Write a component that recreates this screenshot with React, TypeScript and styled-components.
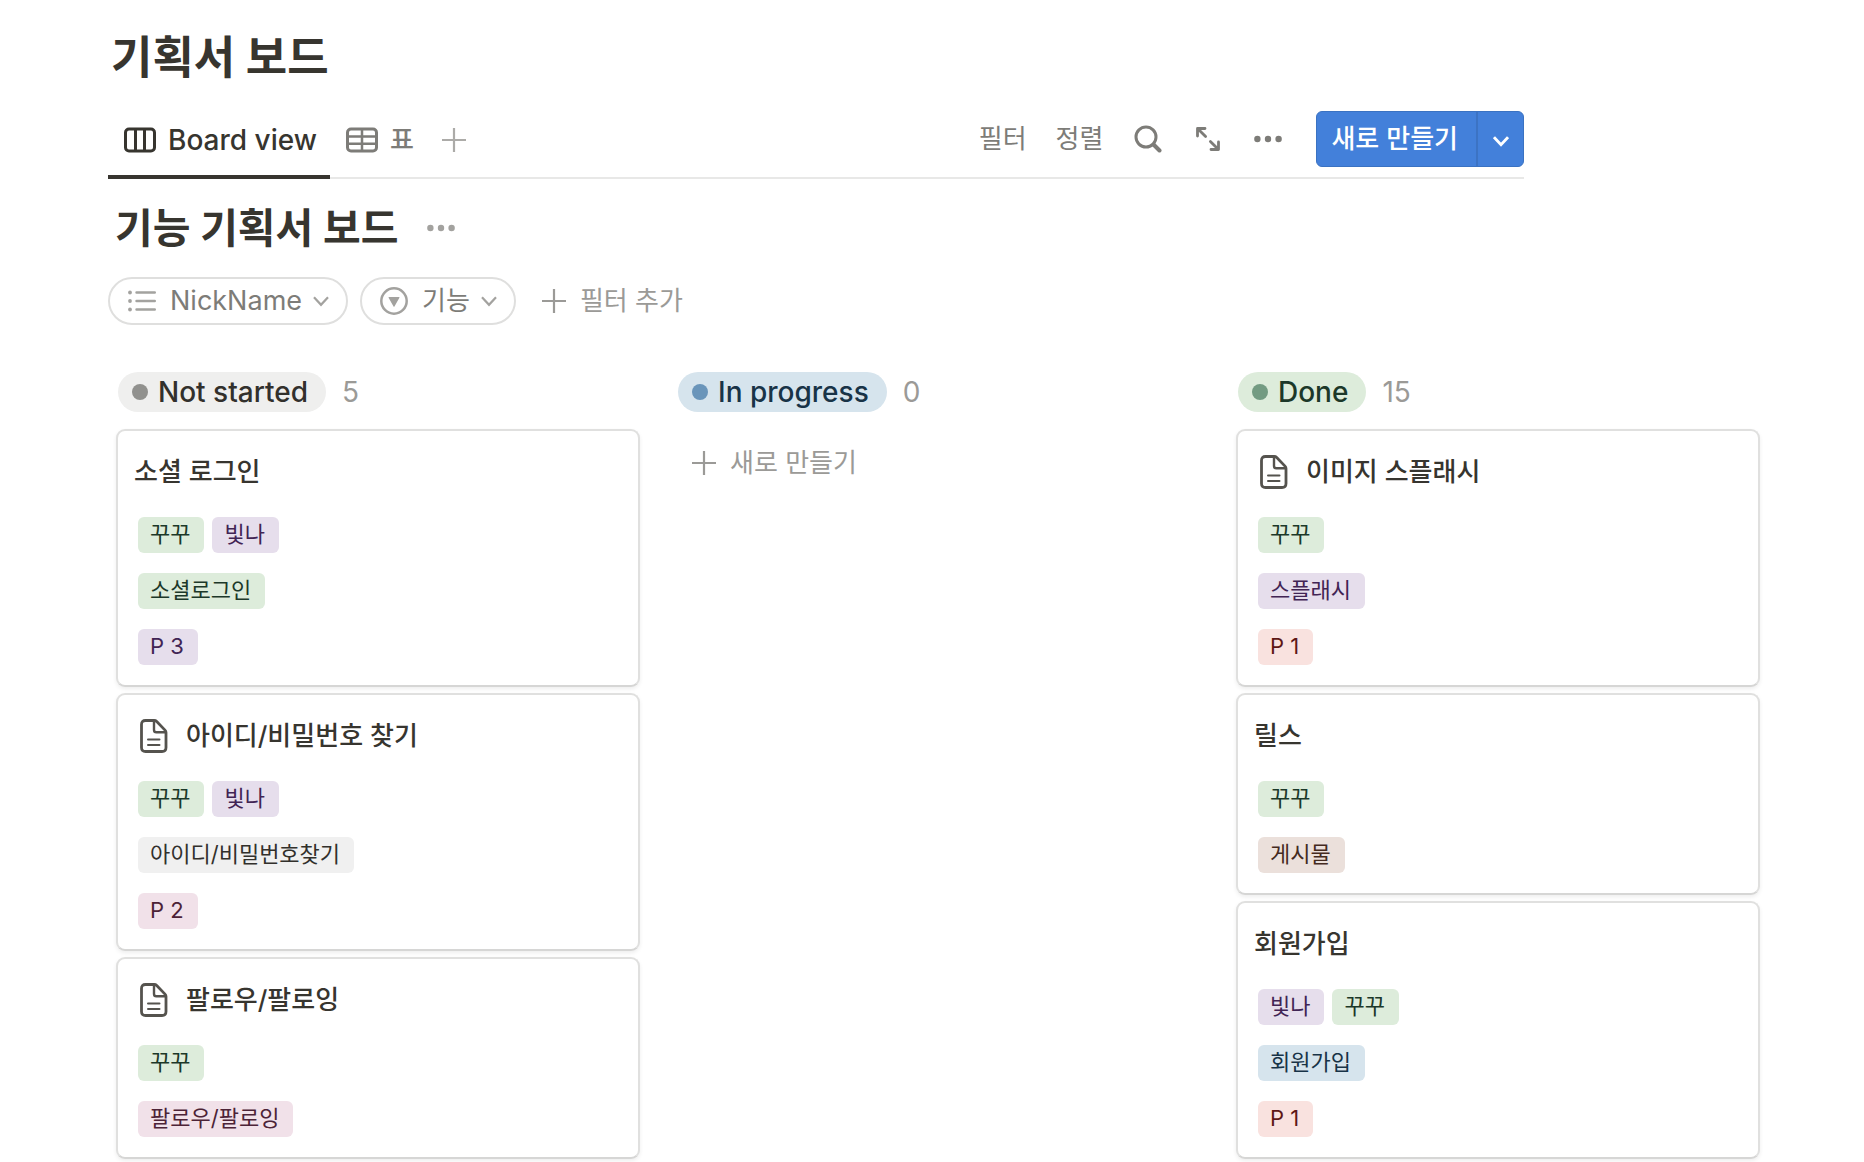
import React from "react";
import styled, { createGlobalStyle } from "styled-components";

const ink = "#37352f";
const muted = "#7d7c78";
const faint = "#9b9a97";
const hairline = "#e8e8e7";

const GlobalStyle = createGlobalStyle`
  * { box-sizing: border-box; }
  body {
    margin: 0;
    background: #fff;
    color: ${ink};
    font-family: Inter, "Noto Sans CJK KR", sans-serif;
    font-size: 26px;
    line-height: 36px;
  }
  h1, h2, h3, ul { margin: 0; padding: 0; }
  ul { list-style: none; }
  button {
    margin: 0;
    padding: 0;
    border: 0;
    background: none;
    color: inherit;
    font: inherit;
    white-space: nowrap;
    cursor: pointer;
  }
  svg { display: block; flex: none; fill: none; stroke: currentColor; }
`;

const Page = styled.main`
  padding: 28px 100px 3px 108px;
`;

const PageTitle = styled.h1`
  padding-left: 3px;
  font-size: 45px;
  line-height: 60px;
  font-weight: 700;
`;

const Toolbar = styled.div`
  display: flex;
  align-items: center;
  justify-content: space-between;
  max-width: 1416px;
  margin-top: 13px;
  border-bottom: 2px solid ${hairline};
`;

const Tabs = styled.nav`
  display: flex;
  margin-bottom: -2px;
`;

const Tab = styled.button<{ $active?: boolean }>`
  display: flex;
  align-items: center;
  gap: 12px;
  height: 78px;
  padding: 3px ${(p) => (p.$active ? 13 : 16)}px 0 16px;
  border-bottom: 4px solid ${(p) => (p.$active ? ink : "transparent")};
  color: ${(p) => (p.$active ? ink : muted)};
  font-size: ${(p) => (p.$active ? 28 : 26)}px;
  font-weight: 500;
`;

const AddTab = styled.button`
  padding: 0 12px;
  color: #acaba8;
`;

const Actions = styled.div`
  display: flex;
  align-items: center;
  gap: 28px;
  color: ${muted};
`;

const TextAction = styled.button`
  padding-right: 1px;
`;

const IconAction = styled.button`
  display: flex;
  align-items: center;
  justify-content: center;
  width: 32px;
  height: 36px;
`;

const SplitButton = styled.div`
  display: flex;
  height: 56px;
  margin-left: 4px;
  border: 1px solid #3a72c2;
  border-radius: 6px;
  background: #4380da;
  color: #fff;
`;

const CreateButton = styled.button`
  padding: 0 18px 0 14px;
  border-right: 2px solid #3c73c4;
  font-weight: 500;
`;

const CreateMenu = styled.button`
  display: flex;
  align-items: center;
  justify-content: center;
  width: 45px;
  padding-top: 4px;
`;

const BoardHeading = styled.div`
  display: flex;
  align-items: center;
  gap: 29px;
  margin-top: 25px;
  padding-left: 7px;
  color: #a3a29f;
`;

const BoardTitle = styled.h2`
  color: ${ink};
  font-size: 41px;
  line-height: 48px;
  font-weight: 700;
`;

const Filters = styled.div`
  display: flex;
  align-items: center;
  gap: 12px;
  margin-top: 25px;
`;

const Chip = styled.button<{ $latin?: boolean }>`
  display: flex;
  align-items: center;
  gap: 10px;
  height: 48px;
  padding: 0 17px 0 18px;
  border: 2px solid #dfdfde;
  border-radius: 24px;
  color: #a3a29f;
  font-size: ${(p) => (p.$latin ? 27 : 26)}px;

  span {
    padding: 0 1px 0 4px;
    color: ${muted};
  }
`;

const AddButton = styled.button`
  display: flex;
  align-items: center;
  gap: 14px;
  height: 48px;
  padding: 0 14px;
  color: ${faint};
`;

const NewCard = styled(AddButton)`
  height: 68px;
  padding: 0 16px;
`;

const Board = styled.div`
  display: flex;
  gap: 36px;
  margin-top: 47px;
  padding-left: 8px;
`;

const Column = styled.section`
  flex: 0 1 524px;
  min-width: 0;
`;

const ColumnHeader = styled.header`
  display: flex;
  align-items: center;
  gap: 16px;
  margin-bottom: 17px;
  padding-left: 2px;
  color: ${faint};
  font-size: 28px;
  line-height: 40px;
`;

const statusTones = {
  gray: { fill: "#efefee", text: "#32302c", dot: "#91918e" },
  blue: { fill: "#d6e4ed", text: "#183347", dot: "#6a95ba" },
  green: { fill: "#ddecdb", text: "#1c3829", dot: "#739b82" },
};

const Status = styled.h2<{ $tone: keyof typeof statusTones }>`
  display: flex;
  align-items: center;
  gap: 10px;
  height: 40px;
  padding: 0 18px 0 14px;
  border-radius: 20px;
  background: ${(p) => statusTones[p.$tone].fill};
  color: ${(p) => statusTones[p.$tone].text};
  font-size: 28px;
  font-weight: 500;
  white-space: nowrap;

  &::before {
    content: "";
    width: 16px;
    height: 16px;
    border-radius: 50%;
    background: ${(p) => statusTones[p.$tone].dot};
  }
`;

const CardList = styled.ul`
  display: flex;
  flex-direction: column;
  gap: 6px;
`;

const CardBox = styled.li`
  padding: 23px 16px 20px;
  border: 2px solid #e0e0df;
  border-bottom-color: #d6d6d5;
  border-radius: 9px;
  background: #fff;
  box-shadow: 0 2px 4px rgba(15, 15, 15, 0.07);
`;

const CardTitle = styled.h3`
  display: flex;
  align-items: center;
  gap: 18px;
  margin-bottom: 27px;
  font-size: 26px;
  line-height: 36px;
  font-weight: 500;

  svg { margin-left: 6px; color: #55534e; }
`;

const TagRows = styled.div`
  display: flex;
  flex-direction: column;
  gap: 20px;
  padding-left: 4px;
`;

const TagRow = styled.div`
  display: flex;
  flex-wrap: wrap;
  gap: 8px;
`;

const tagTones = {
  green: ["#ddecdb", "#1c3829"],
  purple: ["#e6deec", "#412454"],
  gray: ["#f0f0f0", "#32302c"],
  pink: ["#f1e1e9", "#4c2337"],
  red: ["#f9e2df", "#5d1715"],
  brown: ["#ebe0db", "#442a1e"],
  blue: ["#d6e4ed", "#183347"],
};
type Tone = keyof typeof tagTones;

const Tag = styled.span<{ $tone: Tone }>`
  height: 36px;
  padding: 0 14px 0 12px;
  border-radius: 6px;
  background: ${(p) => tagTones[p.$tone][0]};
  color: ${(p) => tagTones[p.$tone][1]};
  font-size: 22px;
  line-height: 34px;
  white-space: nowrap;
`;

const BoardIcon = () => (
  <svg width="32" height="26" viewBox="0 0 32 26" strokeWidth="3">
    <rect x="1.5" y="2" width="29" height="22" rx="3.5" />
    <path d="M11.5 2v22M20.5 2v22" />
  </svg>
);

const TableIcon = () => (
  <svg width="32" height="26" viewBox="0 0 32 26" strokeWidth="3">
    <rect x="1.5" y="2" width="29" height="22" rx="3.5" />
    <path d="M2 9.5h28M2 16.8h28M16 2v22" strokeWidth="2.5" />
  </svg>
);

const PlusIcon = () => (
  <svg width="24" height="24" viewBox="0 0 24 24" strokeWidth="2.2">
    <path d="M12 0v24M0 12h24" />
  </svg>
);

const SearchIcon = () => (
  <svg width="28" height="28" viewBox="0 0 28 28" strokeWidth="3" strokeLinecap="round">
    <circle cx="12" cy="12" r="10" />
    <path d="M19.5 19.5l6 6" strokeWidth="4" />
  </svg>
);

const ExpandIcon = () => (
  <svg width="24" height="24" viewBox="0 0 24 24" strokeWidth="2.8" strokeLinecap="round" strokeLinejoin="round">
    <path d="M1.5 9V1.5H9M2 2l7.6 7.6M22.5 15v7.5H15M22 22l-7.6-7.6" />
  </svg>
);

const DotsIcon = () => (
  <svg width="28" height="8" viewBox="0 0 28 8">
    <g fill="currentColor" stroke="none">
      <circle cx="3.4" cy="4" r="3.2" />
      <circle cx="14" cy="4" r="3.2" />
      <circle cx="24.6" cy="4" r="3.2" />
    </g>
  </svg>
);

const ChevronIcon = ({ weight = 2.2 }: { weight?: number }) => (
  <svg width="16" height="12" viewBox="0 0 16 12" strokeWidth={weight}>
    <path d="M1 2.2l7 7.6 7-7.6" />
  </svg>
);

const ListIcon = () => (
  <svg width="28" height="22" viewBox="0 0 28 22" strokeWidth="2.4" strokeLinecap="round">
    <path d="M8.5 2.5h18.3M8.5 11h18.3M8.5 19.5h18.3" />
    <g fill="currentColor" stroke="none">
      <circle cx="2" cy="2.5" r="1.9" />
      <circle cx="2" cy="11" r="1.9" />
      <circle cx="2" cy="19.5" r="1.9" />
    </g>
  </svg>
);

const SelectIcon = () => (
  <svg width="28" height="28" viewBox="0 0 28 28" strokeWidth="2.5">
    <circle cx="14" cy="14" r="12.7" />
    <path d="M9 10h10a.5.5 0 0 1 .4.8l-4.8 8.4a.7.7 0 0 1-1.2 0l-4.8-8.4a.5.5 0 0 1 .4-.8z" fill="currentColor" stroke="none" />
  </svg>
);

const PageIcon = () => (
  <svg width="28" height="34" viewBox="0 0 28 34" strokeWidth="2.8" strokeLinejoin="round">
    <path d="M5.5 1.5h8.7c1 0 1.8.3 2.5 1l8.3 8.6c.7.7 1 1.5 1 2.4v15c0 2.6-1.4 4-4 4H5.5c-2.6 0-4-1.4-4-4v-23c0-2.6 1.4-4 4-4z" />
    <path d="M14 2v9c0 1.6.7 2.3 2.3 2.3H26" strokeWidth="2.4" />
    <path d="M8 20.5h11.5M8 26h11.5" strokeWidth="2" strokeLinecap="round" />
  </svg>
);

type TagData = [string, Tone];
interface CardData {
  title: string;
  page?: boolean;
  rows: TagData[][];
}

const kku: TagData = ["꾸꾸", "green"];
const bitna: TagData = ["빛나", "purple"];

const notStarted: CardData[] = [
  { title: "소셜 로그인", rows: [[kku, bitna], [["소셜로그인", "green"]], [["P 3", "purple"]]] },
  {
    title: "아이디/비밀번호 찾기",
    page: true,
    rows: [[kku, bitna], [["아이디/비밀번호찾기", "gray"]], [["P 2", "pink"]]],
  },
  { title: "팔로우/팔로잉", page: true, rows: [[kku], [["팔로우/팔로잉", "pink"]]] },
];

const done: CardData[] = [
  { title: "이미지 스플래시", page: true, rows: [[kku], [["스플래시", "purple"]], [["P 1", "red"]]] },
  { title: "릴스", rows: [[kku], [["게시물", "brown"]]] },
  { title: "회원가입", rows: [[bitna, kku], [["회원가입", "blue"]], [["P 1", "red"]]] },
];

const Card = ({ title, page, rows }: CardData) => (
  <CardBox>
    <CardTitle>
      {page && <PageIcon />}
      {title}
    </CardTitle>
    <TagRows>
      {rows.map((row, i) => (
        <TagRow key={i}>
          {row.map(([label, tone]) => (
            <Tag key={label} $tone={tone}>{label}</Tag>
          ))}
        </TagRow>
      ))}
    </TagRows>
  </CardBox>
);

interface BoardColumnProps {
  name: string;
  tone: keyof typeof statusTones;
  count: number;
  cards: CardData[];
}

const BoardColumn = ({ name, tone, count, cards }: BoardColumnProps) => (
  <Column>
    <ColumnHeader>
      <Status $tone={tone}>{name}</Status>
      <span>{count}</span>
    </ColumnHeader>
    {cards.length > 0 ? (
      <CardList>
        {cards.map((card) => (
          <Card key={card.title} {...card} />
        ))}
      </CardList>
    ) : (
      <NewCard>
        <PlusIcon />
        새로 만들기
      </NewCard>
    )}
  </Column>
);

export default function App() {
  return (
    <Page>
      <GlobalStyle />
      <PageTitle>기획서 보드</PageTitle>

      <Toolbar>
        <Tabs>
          <Tab $active><BoardIcon />Board view</Tab>
          <Tab><TableIcon />표</Tab>
          <AddTab aria-label="보기 추가"><PlusIcon /></AddTab>
        </Tabs>
        <Actions>
          <TextAction>필터</TextAction>
          <TextAction>정렬</TextAction>
          <IconAction aria-label="검색"><SearchIcon /></IconAction>
          <IconAction aria-label="전체 화면"><ExpandIcon /></IconAction>
          <IconAction aria-label="더 보기"><DotsIcon /></IconAction>
          <SplitButton>
            <CreateButton>새로 만들기</CreateButton>
            <CreateMenu aria-label="템플릿"><ChevronIcon weight={2.8} /></CreateMenu>
          </SplitButton>
        </Actions>
      </Toolbar>

      <BoardHeading>
        <BoardTitle>기능 기획서 보드</BoardTitle>
        <button aria-label="보드 메뉴"><DotsIcon /></button>
      </BoardHeading>

      <Filters>
        <Chip $latin><ListIcon /><span>NickName</span><ChevronIcon /></Chip>
        <Chip><SelectIcon /><span>기능</span><ChevronIcon /></Chip>
        <AddButton><PlusIcon />필터 추가</AddButton>
      </Filters>

      <Board>
        <BoardColumn name="Not started" tone="gray" count={5} cards={notStarted} />
        <BoardColumn name="In progress" tone="blue" count={0} cards={[]} />
        <BoardColumn name="Done" tone="green" count={15} cards={done} />
      </Board>
    </Page>
  );
}
